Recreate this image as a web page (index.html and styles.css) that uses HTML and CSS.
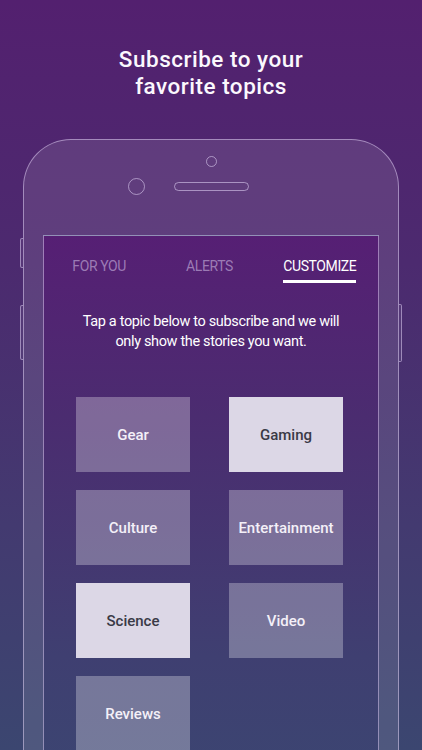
FILE: index.html
```html
<!DOCTYPE html>
<html lang="en">
<head>
<meta charset="utf-8">
<title>Subscribe to your favorite topics</title>
<link rel="stylesheet" href="styles.css">
</head>
<body>
<div class="page">
  <h1 class="headline">Subscribe to your<br>favorite topics</h1>
  <div class="phone">
    <span class="btn btn-mute"></span>
    <span class="btn btn-vol"></span>
    <span class="btn btn-power"></span>
    <div class="sensors">
      <span class="camera-dot"></span>
      <div class="sensor-row">
        <span class="front-cam"></span>
        <span class="speaker"></span>
        <span></span>
      </div>
    </div>
    <div class="screen">
      <nav class="tabs">
        <span class="tab">FOR YOU</span>
        <span class="tab">ALERTS</span>
        <span class="tab active">CUSTOMIZE</span>
      </nav>
      <p class="intro">Tap a topic below to subscribe and we will<br>only show the stories you want.</p>
      <div class="topics">
        <div class="topic">Gear</div>
        <div class="topic selected">Gaming</div>
        <div class="topic">Culture</div>
        <div class="topic">Entertainment</div>
        <div class="topic selected">Science</div>
        <div class="topic">Video</div>
        <div class="topic">Reviews</div>
      </div>
    </div>
  </div>
</div>
</body>
</html>
```

FILE: styles.css
```css
html, body {
  margin: 0;
  padding: 0;
}
body {
  width: 422px;
  height: 750px;
  overflow: hidden;
  font-family: Roboto, "Liberation Sans", sans-serif;
  color: #fff;
  background: linear-gradient(180deg, #53206f 0%, #4c2a6f 35%, #433a70 70%, #3b4670 100%);
}
.page {
  width: 422px;
  height: 750px;
  overflow: hidden;
}
.headline {
  margin: 0;
  padding-top: 46px;
  text-align: center;
  font-size: 22.5px;
  line-height: 27px;
  font-weight: 500;
  letter-spacing: 0.5px;
  color: #fbf8fd;
}
.phone {
  position: relative;
  margin: 39px 0 0 23px;
  width: 374px;
  height: 700px;
  border: 1px solid rgba(220, 205, 240, 0.55);
  border-bottom: none;
  border-radius: 48px 48px 0 0;
  background: rgba(255, 255, 255, 0.1);
}
.btn {
  position: absolute;
  width: 2px;
  border: 1px solid rgba(220, 205, 240, 0.55);
  background: rgba(255, 255, 255, 0.06);
}
.btn-mute { left: -4px; top: 98px; height: 28px; border-right: none; border-radius: 2px 0 0 2px; }
.btn-vol { left: -4px; top: 165px; height: 53px; border-right: none; border-radius: 2px 0 0 2px; }
.btn-power { right: -4px; top: 164px; height: 56px; border-left: none; border-radius: 0 2px 2px 0; }
.sensors {
  height: 95px;
  display: flex;
  flex-direction: column;
  align-items: center;
}
.camera-dot {
  margin-top: 16px;
  width: 9px;
  height: 9px;
  border: 1px solid rgba(220, 205, 240, 0.6);
  border-radius: 50%;
}
.sensor-row {
  margin-top: 11px;
  width: 100%;
  display: grid;
  grid-template-columns: 1fr 75px 1fr;
  align-items: center;
}
.front-cam {
  justify-self: end;
  margin-right: 29px;
  width: 15px;
  height: 15px;
  border: 1px solid rgba(220, 205, 240, 0.6);
  border-radius: 50%;
}
.speaker {
  border: 1px solid rgba(220, 205, 240, 0.6);
  border-radius: 5px;
  box-sizing: border-box;
  height: 9px;
}
.screen {
  margin-left: 19px;
  width: 334px;
  height: 600px;
  border: 1px solid rgba(220, 205, 240, 0.55);
  border-bottom: none;
  background: linear-gradient(180deg, #561f74 0%, #4b2c70 30%, #3f3f71 70%, #3a4872 100%);
}
.tabs {
  display: grid;
  grid-template-columns: repeat(3, 1fr);
  padding: 22px 3px 0 0;
  text-align: center;
}
.tab {
  justify-self: center;
  font-size: 14px;
  line-height: 17px;
  letter-spacing: -0.4px;
  color: rgba(205, 185, 225, 0.6);
  padding-bottom: 5px;
  border-bottom: 3px solid transparent;
}
.tab.active {
  color: #fff;
  border-bottom-color: #fff;
}
.intro {
  margin: 29px 0 0;
  text-align: center;
  font-size: 14.5px;
  line-height: 19.5px;
  color: #fff;
  letter-spacing: -0.35px;
}
.topics {
  margin: 46px 0 0 32px;
  display: grid;
  grid-template-columns: 114px 114px;
  column-gap: 39px;
  row-gap: 18px;
}
.topic {
  height: 75px;
  display: flex;
  align-items: center;
  justify-content: center;
  font-size: 15px;
  font-weight: 500;
  color: #f4f0f8;
  background: rgba(255, 255, 255, 0.29);
}
.topic.selected {
  background: #dcd7e6;
  color: #3a3a46;
}
```
